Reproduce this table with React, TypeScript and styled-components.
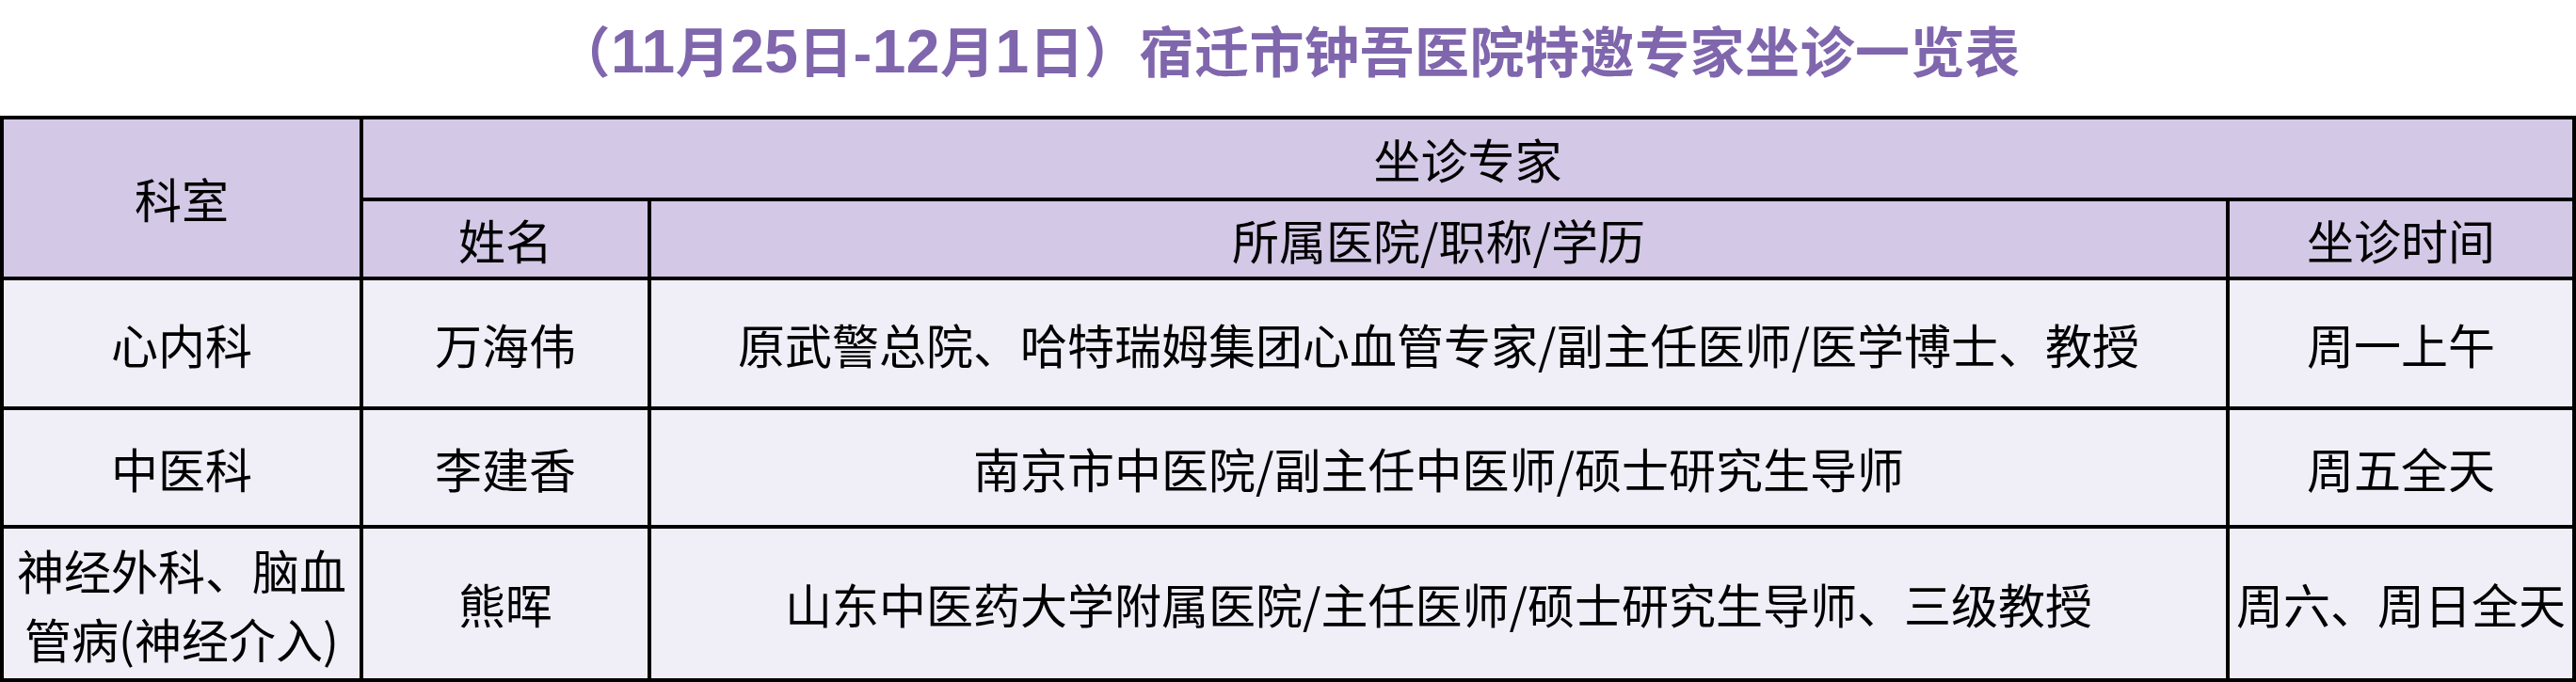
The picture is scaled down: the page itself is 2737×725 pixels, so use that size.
import { Fragment } from "react";
import styled, { createGlobalStyle } from "styled-components";

const GlobalStyle = createGlobalStyle`
  html, body {
    margin: 0;
    padding: 0;
    background: #ffffff;
  }
`;

type Row = {
  dept: string[];
  name: string;
  hospital: string;
  time: string;
};

const rows: Row[] = [
  {
    dept: ["心内科"],
    name: "万海伟",
    hospital: "原武警总院、哈特瑞姆集团心血管专家/副主任医师/医学博士、教授",
    time: "周一上午",
  },
  {
    dept: ["中医科"],
    name: "李建香",
    hospital: "南京市中医院/副主任中医师/硕士研究生导师",
    time: "周五全天",
  },
  {
    dept: ["神经外科、脑血", "管病(神经介入)"],
    name: "熊晖",
    hospital: "山东中医药大学附属医院/主任医师/硕士研究生导师、三级教授",
    time: "周六、周日全天",
  },
];

const App = () => {
  return (
    <Page>
      <GlobalStyle />
      <TitleBar>
        <Title>
          （<Num>11</Num>月<Num>25</Num>日-<Num>12</Num>月<Num>1</Num>日）宿迁市钟吾医院特邀专家坐诊一览表
        </Title>
      </TitleBar>

      <Table>
        <HeadCell $rowSpan={2}>科室</HeadCell>
        <HeadCell $colSpan={3}>坐诊专家</HeadCell>
        <HeadCell>姓名</HeadCell>
        <HeadCell>所属医院/职称/学历</HeadCell>
        <HeadCell>坐诊时间</HeadCell>

        {rows.map((row) => (
          <Fragment key={row.name}>
            <BodyCell>
              <Lines>
                {row.dept.map((line) => (
                  <span key={line}>{line}</span>
                ))}
              </Lines>
            </BodyCell>
            <BodyCell>{row.name}</BodyCell>
            <BodyCell>{row.hospital}</BodyCell>
            <BodyCell>{row.time}</BodyCell>
          </Fragment>
        ))}
      </Table>
    </Page>
  );
};

const Page = styled.div`
  width: 2737px;
  height: 725px;
  overflow: hidden;
  background: #ffffff;
  font-family: "Noto Sans CJK SC", "Noto Sans", sans-serif;
`;

const TitleBar = styled.div`
  height: 123px;
  display: flex;
  align-items: center;
  justify-content: center;
  padding-bottom: 14px;
  box-sizing: border-box;
`;

const Title = styled.h1`
  margin: 0;
  font-family: "Liberation Sans", "Noto Sans CJK SC", sans-serif;
  font-size: 58px;
  font-weight: 700;
  line-height: 1;
  letter-spacing: 0.5px;
  color: #7f66ad;
  white-space: nowrap;
`;

const Num = styled.span`
  font-size: 64px;
`;

const Table = styled.div`
  display: grid;
  grid-template-columns: 378px 302px 1673px 364px;
  grid-template-rows: 83px 80px 134px 122px 159px;
  gap: 4px;
  padding: 4px;
  background: #000000;
`;

const Cell = styled.div`
  display: flex;
  align-items: center;
  justify-content: center;
  text-align: center;
  font-size: 50px;
  line-height: 1.45;
  color: #000000;
  white-space: nowrap;
`;

const HeadCell = styled(Cell)<{ $rowSpan?: number; $colSpan?: number }>`
  background: #d3c8e6;
  grid-row: span ${({ $rowSpan }) => $rowSpan ?? 1};
  grid-column: span ${({ $colSpan }) => $colSpan ?? 1};
`;

const BodyCell = styled(Cell)`
  background: #f0eef7;
`;

const Lines = styled.div`
  display: flex;
  flex-direction: column;
  align-items: center;
`;

export default App;
